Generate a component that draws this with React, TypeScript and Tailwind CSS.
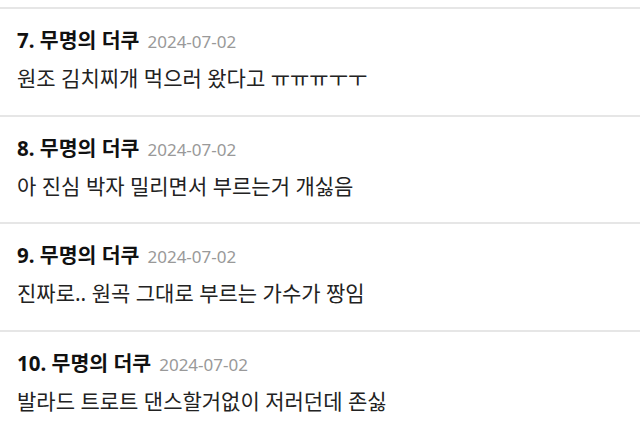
import React from "react";

const items = [
  { n: "7.", body: "원조 김치찌개 먹으러 왔다고 ㅠㅠㅠㅜㅜ" },
  { n: "8.", body: "아 진심 박자 밀리면서 부르는거 개싫음" },
  { n: "9.", body: "진짜로.. 원곡 그대로 부르는 가수가 짱임" },
  { n: "10.", body: "발라드 트로트 댄스할거없이 저러던데 존싫" },
];

export default function App() {
  return (
    <div
      className="w-[640px] h-[428px] overflow-hidden bg-white pt-[7px]"
      style={{ fontFamily: '"Noto Sans", "Noto Sans CJK KR", sans-serif' }}
    >
      {items.map((it) => (
        <div key={it.n} className="border-t-2 border-[#e6e6e6] h-[107.5px] pl-[17px] pt-[18px]">
          <div className="flex items-baseline leading-[26px]">
            <span className="text-[20.5px] font-bold text-[#111]">
              {it.n} 무명의 더쿠
            </span>
            <span className="ml-[8px] text-[17px] text-[#999]">2024-07-02</span>
          </div>
          <div className="mt-[9px] text-[21px] leading-[28px] text-[#222]">{it.body}</div>
        </div>
      ))}
    </div>
  );
}
